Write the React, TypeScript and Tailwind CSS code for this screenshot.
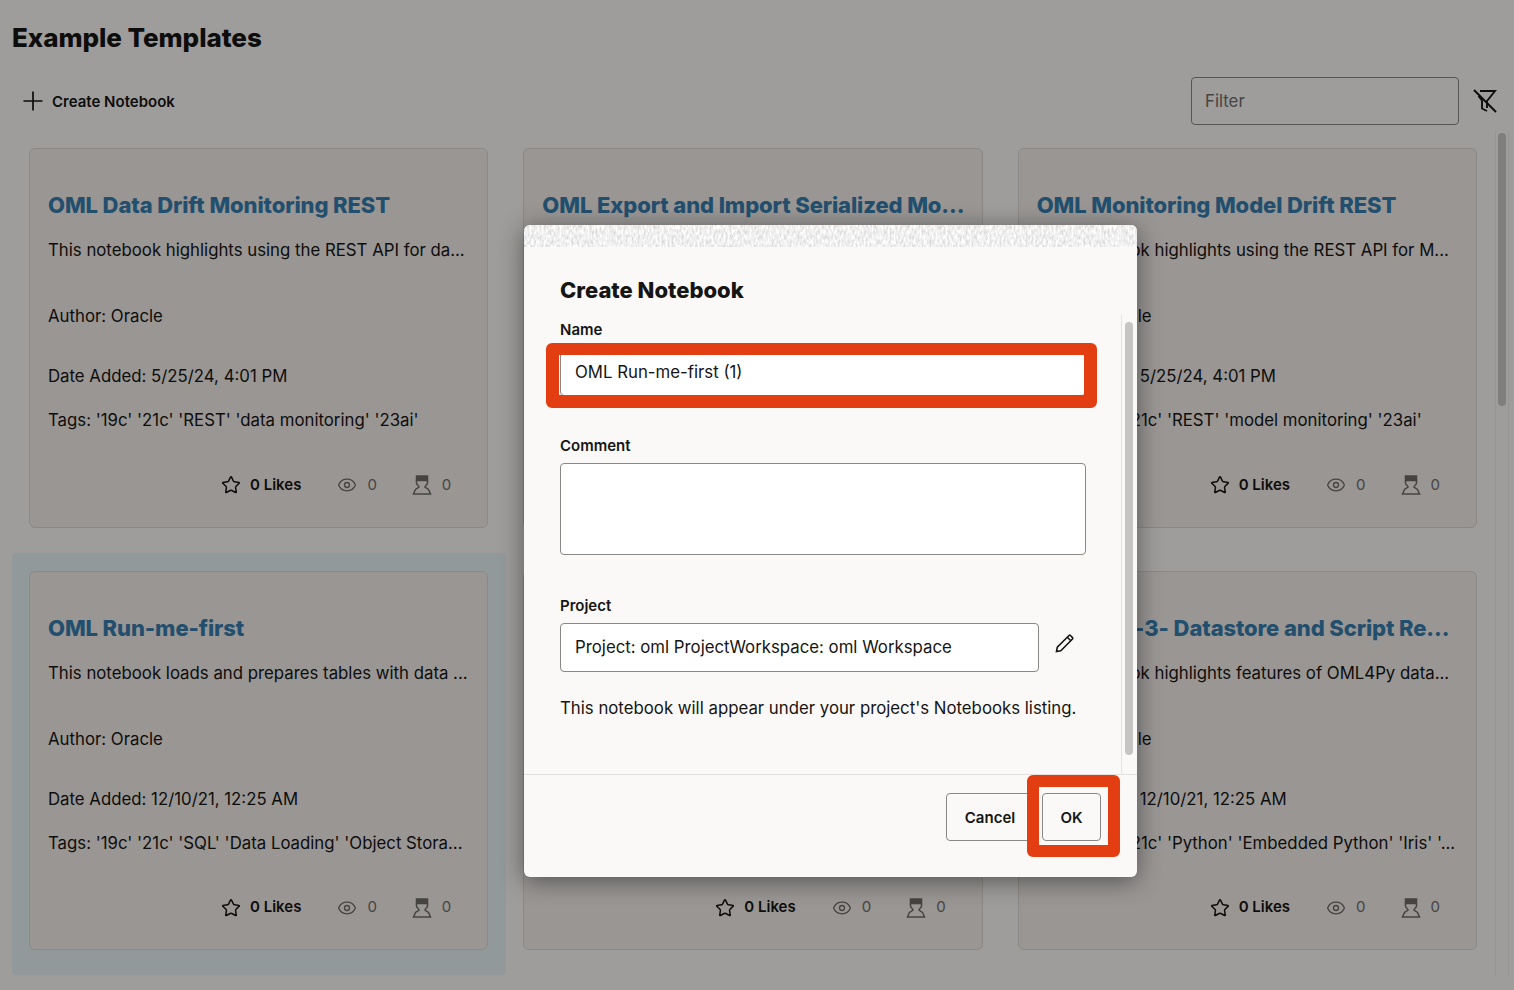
import { Eye, Star } from 'lucide-react'

type Template = {
  title: string
  desc: string
  date: string
  tags: string
}

const templates: Template[] = [
  {
    title: 'OML Data Drift Monitoring REST',
    desc: 'This notebook highlights using the REST API for da...',
    date: '5/25/24, 4:01 PM',
    tags: "Tags: '19c' '21c' 'REST' 'data monitoring' '23ai'",
  },
  {
    title: 'OML Export and Import Serialized Mo...',
    desc: 'This notebook highlights exporting and importing m...',
    date: '5/25/24, 4:01 PM',
    tags: "Tags: '19c' '21c' 'REST' 'model export' '23ai'",
  },
  {
    title: 'OML Monitoring Model Drift REST',
    desc: 'This notebook highlights using the REST API for M...',
    date: '5/25/24, 4:01 PM',
    tags: "Tags: '19c' '21c' 'REST' 'model monitoring' '23ai'",
  },
  {
    title: 'OML Run-me-first',
    desc: 'This notebook loads and prepares tables with data ...',
    date: '12/10/21, 12:25 AM',
    tags: "Tags: '19c' '21c' 'SQL' 'Data Loading' 'Object Stora...",
  },
  {
    title: 'OML4Py-2- Data Selection and Manip...',
    desc: 'This notebook highlights features of OML4Py data...',
    date: '12/10/21, 12:25 AM',
    tags: "Tags: '19c' '21c' 'Python' 'Data Selection' '23ai'",
  },
  {
    title: 'OML4Py -3- Datastore and Script Re...',
    desc: 'This notebook highlights features of OML4Py data...',
    date: '12/10/21, 12:25 AM',
    tags: "Tags: '19c' '21c' 'Python' 'Embedded Python' 'Iris' '...",
  },
]

function PlusIcon() {
  return (
    <svg width="20" height="20" viewBox="0 0 20 20" stroke="#161513" strokeWidth="1.7">
      <path d="M10 0.5v19M0.5 10h19" />
    </svg>
  )
}

function FilterOff() {
  return (
    <svg width="26" height="26" viewBox="0 0 26 26" fill="none" stroke="#161513" strokeWidth="1.9">
      <path d="M8 3h15l-8 10v7" />
      <path d="M6.500 8l3.500 4.500v8l5 2.500" />
      <path d="M2 2l22 22" />
    </svg>
  )
}

function Deploy() {
  return (
    <svg width="20" height="20" viewBox="0 0 20 20" fill="none" stroke="#6f6d6a" strokeWidth="1.5">
      <path d="M4.500 1h11v4.500h-11z" fill="#6f6d6a" />
      <path d="M4.500 5.500v2.500c0 2 2.500 2.500 2.500 4l-3.500 2.500-2 4.500h17l-2-4.500-3.500-2.500c0-1.500 2.500-2 2.500-4v-2.500" />
    </svg>
  )
}

function PencilIcon() {
  return (
    <svg width="20" height="20" viewBox="0 0 20 20" fill="none" stroke="#161513" strokeWidth="1.6">
      <path d="M1.500 18.500l.8-4.300L14 2.500a1 1 0 0 1 1.400 0l2.100 2.100a1 1 0 0 1 0 1.400L5.800 17.700z" />
      <path d="M12.300 4.200l3.500 3.500" />
    </svg>
  )
}

function TitleBarNoise() {
  return (
    <svg className="block h-[22px] w-full shrink-0">
      <filter id="grip" colorInterpolationFilters="sRGB" x="0" y="0" width="100%" height="100%">
        <feTurbulence type="fractalNoise" baseFrequency="0.5 0.2" numOctaves="2" seed="4" />
        <feColorMatrix values="0.3 0 0 0 0.79 0.3 0 0 0 0.79 0.3 0 0 0 0.79 0 0 0 0 1" />
      </filter>
      <rect width="100%" height="100%" filter="url(#grip)" />
    </svg>
  )
}

function TemplateCard({ t, selected }: { t: Template; selected?: boolean }) {
  return (
    <div className={`pl-[17px] pr-[18px] pt-[18px] rounded-sm ${selected ? 'bg-[#e8f3f5]' : ''}`}>
      <div className="h-[379.5px] rounded-md border border-[#dcd7d3] bg-[#f3eeeb] px-[18px] pt-[40px]">
        <h2 className="text-[22px] leading-8 font-extrabold tracking-[-0.1px] text-[#387eae] whitespace-nowrap">
          {t.title}
        </h2>
        <p className="mt-[17px] text-[16.8px] leading-6 whitespace-nowrap">{t.desc}</p>
        <p className="mt-[42px] text-[16.8px] leading-6">Author: Oracle</p>
        <p className="mt-[36px] text-[16.8px] leading-6">Date Added: {t.date}</p>
        <p className="mt-[20px] text-[16.8px] leading-6 whitespace-nowrap">{t.tags}</p>
        <div className="mt-[41px] flex h-6 items-center justify-end pr-[18px]">
          <Star size={20} strokeWidth={1.8} />
          <span className="ml-[9px] text-[15px] font-semibold">0 Likes</span>
          <Eye size={20} strokeWidth={1.6} className="ml-[36px] text-[#6f6d6a]" />
          <span className="ml-[10px] text-[15px] text-[#6f6d6a]">0</span>
          <span className="ml-[35px]">
            <Deploy />
          </span>
          <span className="ml-[10px] text-[15px] text-[#6f6d6a]">0</span>
        </div>
      </div>
    </div>
  )
}

export default function App() {
  return (
    <div className="relative h-[990px] w-[1514px] overflow-hidden bg-[#fbf9f6] font-['Inter',sans-serif] text-[#161513]">
      <h1 className="pl-3 pt-[21px] text-[26px] leading-[34px] font-extrabold tracking-[-0.05px]">Example Templates</h1>

      <div className="mt-[22px] flex h-12 items-center pl-[23px] pr-4">
        <PlusIcon />
        <span className="ml-[9px] mt-[2px] text-[15px] font-semibold">Create Notebook</span>
        <input
          readOnly
          placeholder="Filter"
          className="ml-auto h-12 w-[268px] rounded border border-[#8a8886] bg-transparent px-[13px] text-[16.8px] placeholder:text-[#6f6e6c]"
        />
        <span className="ml-[13px]">
          <FilterOff />
        </span>
      </div>

      <div className="flex">
        <div className="ml-3 mt-[5px] grid w-[1483px] grid-cols-3 grid-rows-[422.5px_422.5px]">
          {templates.map((t) => (
            <TemplateCard key={t.title} t={t} selected={t.title === 'OML Run-me-first'} />
          ))}
        </div>
        <div className="mt-[6px] h-[846px] w-[14px] border-x border-[#efedea] px-[2px] pt-[2px]">
          <div className="h-[273px] w-2 rounded bg-[#c9c8c6]" />
        </div>
      </div>

      {/* dimmed backdrop */}
      <div className="absolute inset-0 bg-black/[0.37]" />

      <div className="absolute left-[524px] top-[225px] flex h-[652px] w-[613px] flex-col overflow-hidden rounded-md bg-[#faf9f7] shadow-[0_4px_24px_rgba(0,0,0,0.45)]">
        <TitleBarNoise />
        <div className="flex min-h-0 flex-1">
          <div className="min-w-0 flex-1 pl-9 pr-[35px]">
            <h2 className="pt-[25px] text-[22px] leading-9 font-extrabold">Create Notebook</h2>
            <label className="mt-3 block text-[15px] leading-5 font-semibold">Name</label>
            <div className="mt-2 h-12 rounded border border-[#8a8886] bg-white px-[14px] text-[16.8px] leading-[46px]">
              OML Run-me-first (1)
            </div>
            <label className="mt-10 block text-[15px] leading-5 font-semibold">Comment</label>
            <div className="mt-[7px] h-[92px] rounded border border-[#8a8886] bg-white" />
            <label className="mt-[41px] block text-[15px] leading-5 font-semibold">Project</label>
            <div className="mt-[7px] flex items-start">
              <div className="h-[49px] w-[479px] rounded border border-[#8a8886] bg-white px-[14px] text-[16.8px] leading-[47px]">
                Project: oml ProjectWorkspace: oml Workspace
              </div>
              <span className="ml-4 mt-[10px]">
                <PencilIcon />
              </span>
            </div>
            <p className="mt-6 text-[16.8px] leading-6 whitespace-nowrap">
              This notebook will appear under your project's Notebooks listing.
            </p>
          </div>
          <div className="mt-[68px] w-4 shrink-0 border-l border-[#e5e3e0]">
            <div className="ml-[3px] mt-[7px] h-[433px] w-2 rounded bg-[#c6c5c3]" />
          </div>
        </div>
        <div className="flex h-[103px] shrink-0 justify-end gap-2 border-t border-[#e3e1de] pr-9 pt-[18px]">
          <button className="h-12 w-[88px] rounded border border-[#8a8886] pt-[2px] text-[15px] font-semibold">Cancel</button>
          <button className="h-12 w-[59px] rounded border border-[#8a8886] pt-[2px] text-[15px] font-semibold">OK</button>
        </div>
      </div>

      {/* screenshot annotations */}
      <div className="absolute left-[546px] top-[343px] h-[65px] w-[551px] rounded-md border-t-[12px] border-r-[13px] border-b-[13px] border-l-[13px] border-[#e23e12]" />
      <div className="absolute left-[1027px] top-[775px] h-[82px] w-[93px] rounded-md border-[12px] border-[#e23e12]" />
    </div>
  )
}
